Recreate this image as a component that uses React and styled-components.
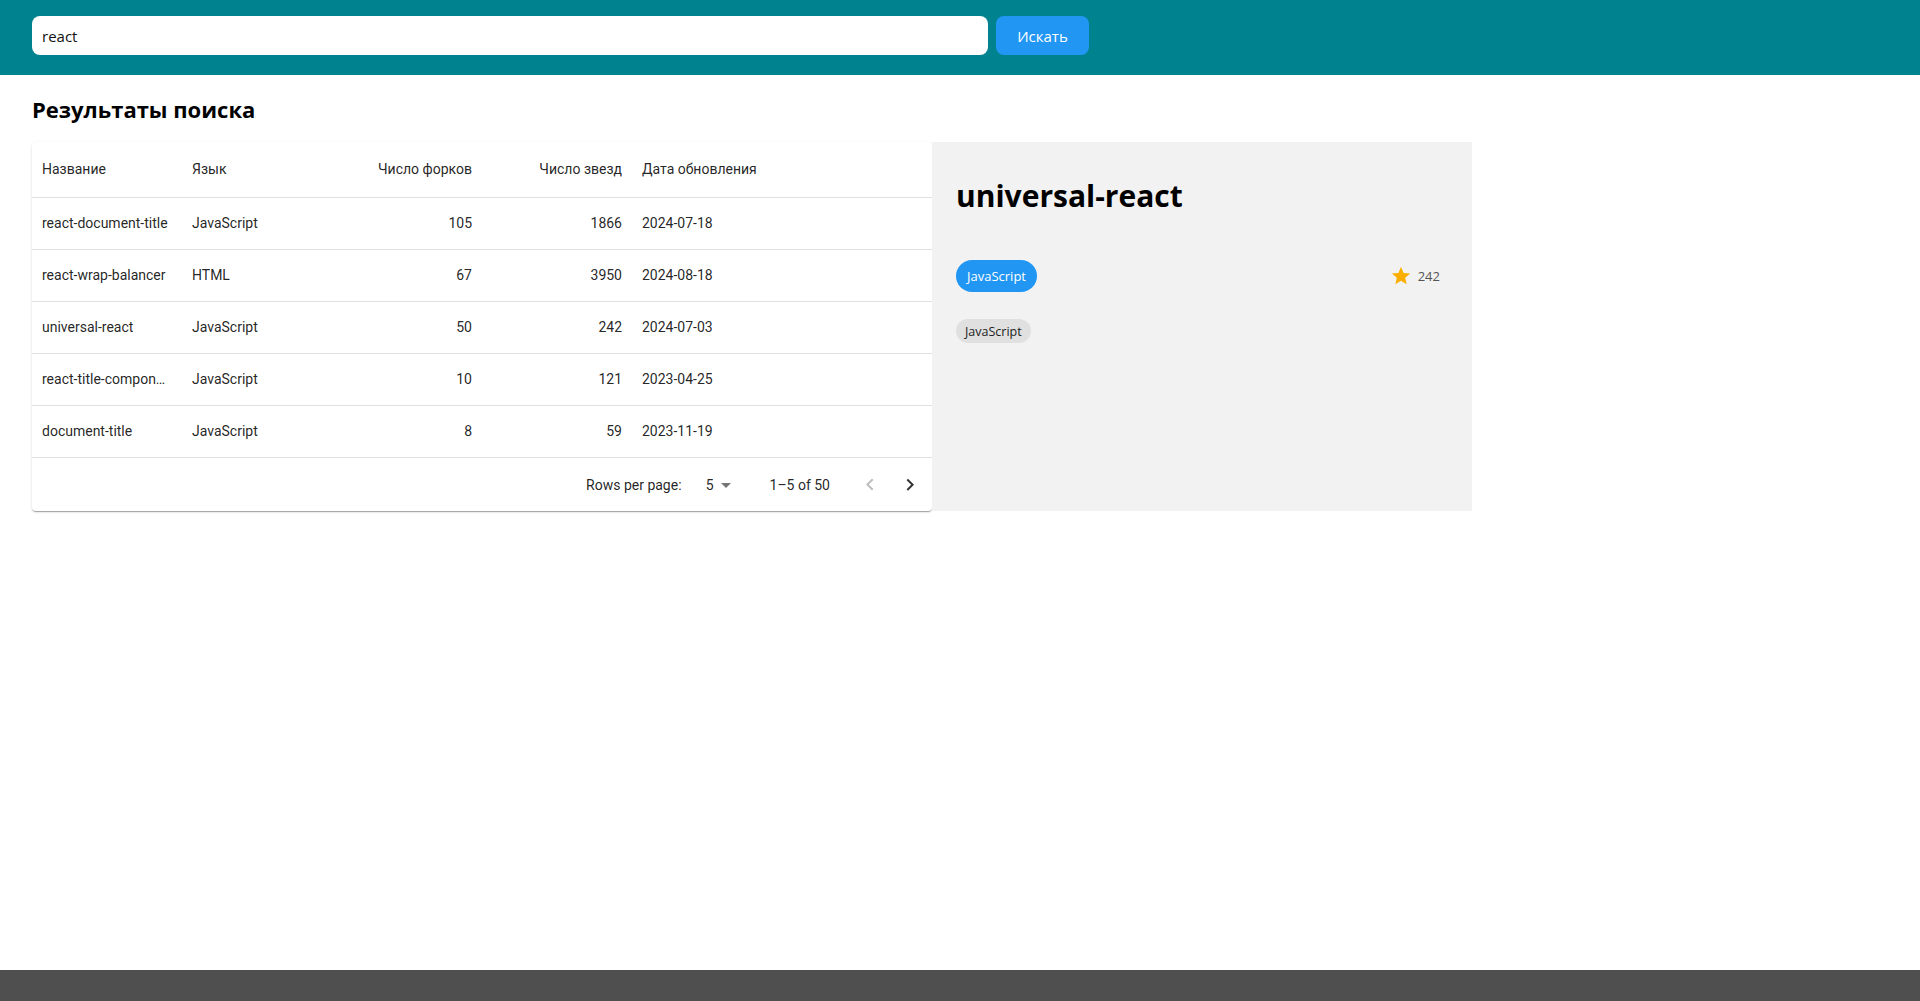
import styled, { createGlobalStyle } from "styled-components";

const GlobalStyle = createGlobalStyle`
  body {
    margin: 0;
    background: #fff;
    font-family: "Open Sans", "Noto Sans", sans-serif;
  }
`;

const Page = styled.div`
  min-height: 100vh;
  display: flex;
  flex-direction: column;
`;

const Header = styled.header`
  height: 75px;
  box-sizing: border-box;
  padding: 16px 32px 0;
  background: #00838f;
  display: flex;
  gap: 8px;
`;

const SearchInput = styled.input`
  width: 956px;
  height: 39px;
  box-sizing: border-box;
  border: none;
  border-radius: 8px;
  padding: 0 10px;
  font: 15px "Open Sans", sans-serif;
  color: #111;
  outline: none;
`;

const SearchButton = styled.button`
  width: 93px;
  height: 39px;
  border: none;
  border-radius: 8px;
  background: #2196f3;
  color: #fff;
  font: 15px "Open Sans", sans-serif;
  cursor: pointer;
`;

const Main = styled.main`
  flex: 1;
  padding: 0 32px;
`;

const Title = styled.h2`
  margin: 21px 0 20px;
  font-size: 22px;
  line-height: 26px;
  font-weight: 700;
  color: #000;
`;

const Results = styled.div`
  display: flex;
  align-items: stretch;
`;

const TableCard = styled.div`
  width: 900px;
  background: #fff;
  border-radius: 4px;
  box-shadow: 0 2px 1px -1px rgba(0, 0, 0, 0.2), 0 1px 1px 0 rgba(0, 0, 0, 0.14),
    0 1px 3px 0 rgba(0, 0, 0, 0.12);
  font-family: Roboto, "Liberation Sans", sans-serif;
  font-size: 14px;
  color: rgba(0, 0, 0, 0.87);
`;

const Table = styled.table`
  width: 100%;
  table-layout: fixed;
  border-collapse: collapse;
`;

const Cell = styled.td`
  padding: 16px 10px;
  height: 19px;
  line-height: 19px;
  border-bottom: 1px solid #e0e0e0;
  text-align: ${(p) => (p.$right ? "right" : "left")};
  white-space: nowrap;
  overflow: hidden;
  text-overflow: ellipsis;
`;

const HeadCell = styled(Cell).attrs({ as: "th" })`
  padding: 17px 10px;
  height: 21px;
  line-height: 21px;
  font-weight: 400;
`;

const Pagination = styled.div`
  height: 53px;
  display: flex;
  align-items: center;
  justify-content: flex-end;
  padding-right: 2px;
`;

const SelectBox = styled.div`
  display: flex;
  align-items: center;
  margin: 0 32px 0 8px;
  padding-left: 8px;
  span {
    min-width: 16px;
    text-align: right;
  }
`;

const Actions = styled.div`
  display: flex;
  margin-left: 20px;
`;

const IconButton = styled.button`
  width: 40px;
  height: 40px;
  padding: 8px;
  border: none;
  background: none;
  border-radius: 50%;
  color: ${(p) => (p.disabled ? "rgba(0,0,0,0.26)" : "rgba(0,0,0,0.8)")};
`;

const Panel = styled.section`
  width: 540px;
  box-sizing: border-box;
  padding: 24px;
  background: #f2f2f2;
`;

const RepoName = styled.h1`
  margin: 10px 0 44px;
  font-size: 30px;
  line-height: 40px;
  font-weight: 700;
  color: #000;
`;

const MetaRow = styled.div`
  display: flex;
  align-items: center;
  justify-content: space-between;
  padding-right: 8px;
`;

const Chip = styled.span`
  display: inline-flex;
  align-items: center;
  height: ${(p) => (p.$small ? "24px" : "32px")};
  padding: 0 ${(p) => (p.$small ? "9px" : "11px")};
  border-radius: 16px;
  background: ${(p) => (p.$primary ? "#2196f3" : "#e0e0e0")};
  color: ${(p) => (p.$primary ? "#fff" : "#222")};
  font-size: ${(p) => (p.$small ? "12.5px" : "13px")};
`;

const Stars = styled.div`
  display: flex;
  align-items: center;
  gap: 6px;
  font-size: 13px;
  color: #555;
`;

const Topics = styled.div`
  margin-top: 27px;
  display: flex;
  gap: 6px;
`;

const Footer = styled.footer`
  height: 31px;
  background: #4f4f4f;
`;

const Icon = ({ d, size = 24, color = "currentColor" }) => (
  <svg width={size} height={size} viewBox="0 0 24 24" fill={color}>
    <path d={d} />
  </svg>
);

const rows = [
  { name: "react-document-title", lang: "JavaScript", forks: 105, stars: 1866, date: "2024-07-18" },
  { name: "react-wrap-balancer", lang: "HTML", forks: 67, stars: 3950, date: "2024-08-18" },
  { name: "universal-react", lang: "JavaScript", forks: 50, stars: 242, date: "2024-07-03" },
  { name: "react-title-component", lang: "JavaScript", forks: 10, stars: 121, date: "2023-04-25" },
  { name: "document-title", lang: "JavaScript", forks: 8, stars: 59, date: "2023-11-19" },
];

export default function App() {
  return (
    <Page>
      <GlobalStyle />
      <Header>
        <SearchInput defaultValue="react" />
        <SearchButton>Искать</SearchButton>
      </Header>
      <Main>
        <Title>Результаты поиска</Title>
        <Results>
          <TableCard>
            <Table>
              <colgroup>
                <col style={{ width: 150 }} />
                <col style={{ width: 150 }} />
                <col style={{ width: 150 }} />
                <col style={{ width: 150 }} />
                <col />
              </colgroup>
              <thead>
                <tr>
                  <HeadCell>Название</HeadCell>
                  <HeadCell>Язык</HeadCell>
                  <HeadCell $right>Число форков</HeadCell>
                  <HeadCell $right>Число звезд</HeadCell>
                  <HeadCell>Дата обновления</HeadCell>
                </tr>
              </thead>
              <tbody>
                {rows.map((r) => (
                  <tr key={r.name}>
                    <Cell>{r.name}</Cell>
                    <Cell>{r.lang}</Cell>
                    <Cell $right>{r.forks}</Cell>
                    <Cell $right>{r.stars}</Cell>
                    <Cell>{r.date}</Cell>
                  </tr>
                ))}
              </tbody>
            </Table>
            <Pagination>
              <span>Rows per page:</span>
              <SelectBox>
                <span>5</span>
                <Icon d="M7 10l5 5 5-5z" color="rgba(0,0,0,0.54)" />
              </SelectBox>
              <span>1–5 of 50</span>
              <Actions>
                <IconButton disabled>
                  <Icon d="M15.41 16.09l-4.58-4.59 4.58-4.59L14 5.5l-6 6 6 6z" />
                </IconButton>
                <IconButton>
                  <Icon d="M8.59 16.34l4.58-4.59-4.58-4.59L10 5.75l6 6-6 6z" />
                </IconButton>
              </Actions>
            </Pagination>
          </TableCard>
          <Panel>
            <RepoName>universal-react</RepoName>
            <MetaRow>
              <Chip $primary>JavaScript</Chip>
              <Stars>
                <Icon
                  d="M12 17.27 18.18 21l-1.64-7.03L22 9.24l-7.19-.61L12 2 9.19 8.63 2 9.24l5.46 4.73L5.82 21z"
                  size={22}
                  color="#faaf00"
                />
                242
              </Stars>
            </MetaRow>
            <Topics>
              <Chip $small>JavaScript</Chip>
            </Topics>
          </Panel>
        </Results>
      </Main>
      <Footer />
    </Page>
  );
}
